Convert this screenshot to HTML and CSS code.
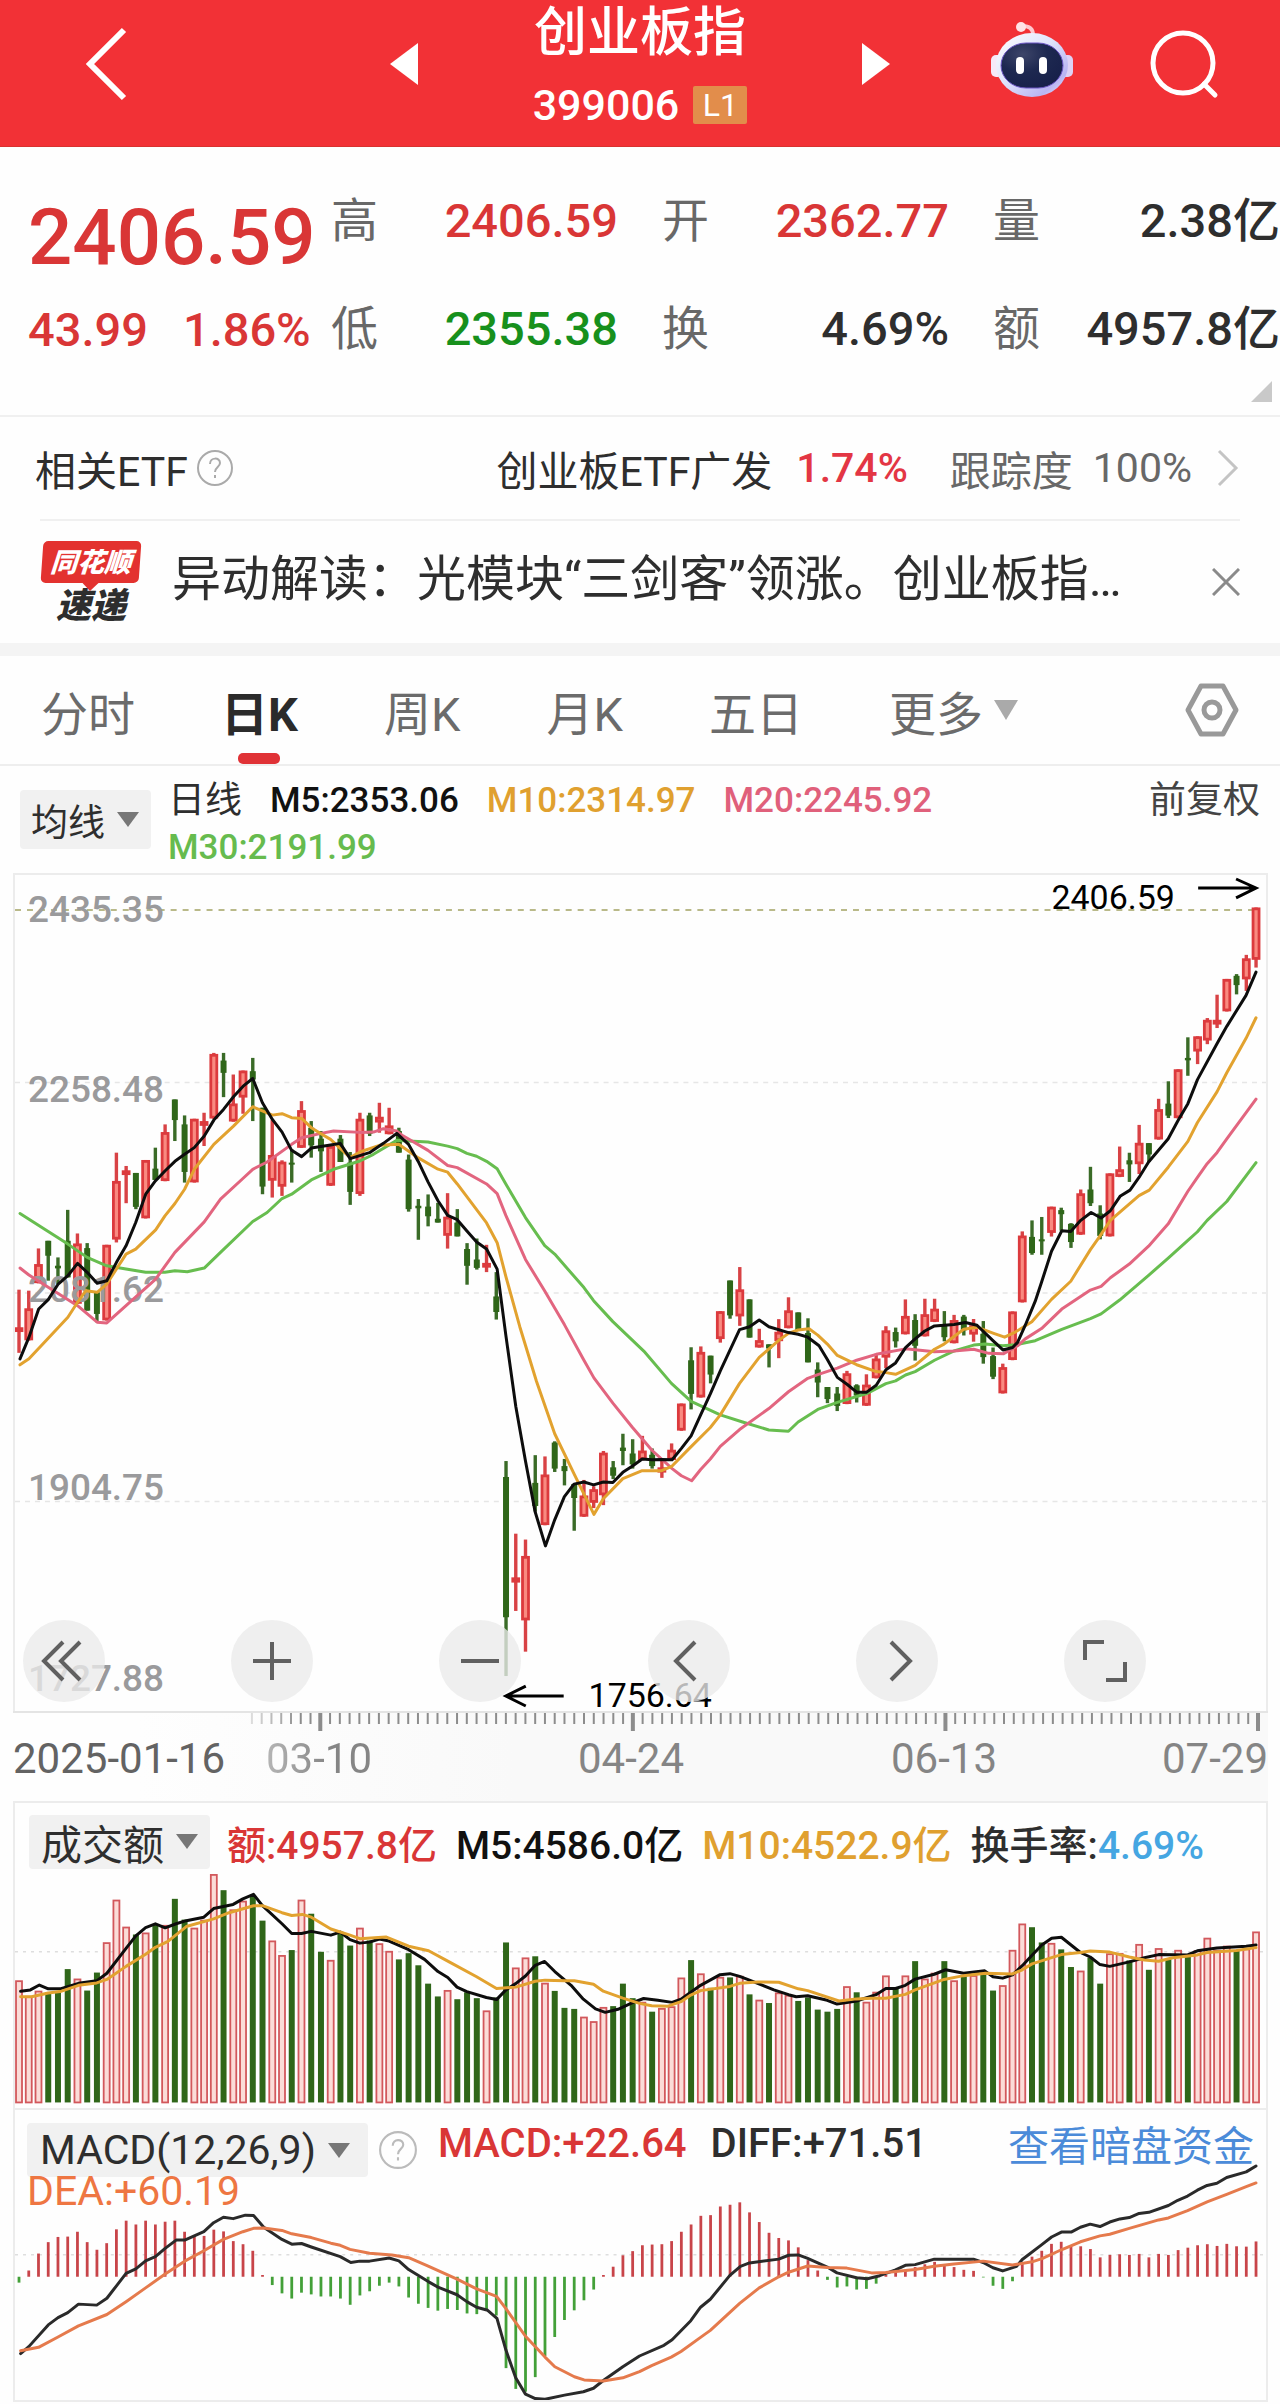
FILE: index.html
```html
<!DOCTYPE html>
<html lang="zh-CN">
<head>
<meta charset="utf-8">
<meta name="viewport" content="width=device-width, initial-scale=1">
<title>创业板指 399006</title>
<link rel="stylesheet" href="styles.css">
</head>
<body>
<header class="topbar">
  <div class="topbar-side">
    <button class="icon-btn back" aria-label="返回"><svg width="46" height="76" viewBox="0 0 46 76"><path d="M41 4 7 38l34 34" fill="none" stroke="#fff" stroke-width="6"/></svg></button>
    <button class="icon-btn" aria-label="上一只"><svg width="28" height="42" viewBox="0 0 28 42"><path d="M28 0v42L0 21z" fill="#fff"/></svg></button>
  </div>
  <div class="topbar-title">
    <h1>创业板指</h1>
    <p class="code">399006<span class="level">L1</span></p>
  </div>
  <div class="topbar-side">
    <button class="icon-btn" aria-label="下一只"><svg width="28" height="42" viewBox="0 0 28 42"><path d="M0 0v42l28-21z" fill="#fff"/></svg></button>
    <button class="icon-btn robot" aria-label="智能助手">
      <svg width="84" height="78" viewBox="0 0 84 78">
        <defs>
          <linearGradient id="shell" x1="0" y1="0" x2="1" y2="1"><stop offset="0" stop-color="#fff"/><stop offset=".45" stop-color="#dfe4fb"/><stop offset=".8" stop-color="#b9b4f2"/><stop offset="1" stop-color="#f3ecff"/></linearGradient>
          <radialGradient id="visor" cx=".35" cy=".25" r=".8"><stop offset="0" stop-color="#3d4569"/><stop offset=".5" stop-color="#1d2850"/><stop offset="1" stop-color="#17204a"/></radialGradient>
        </defs>
        <path d="M43 14c0-7-4-9-11-9" fill="none" stroke="#ffc9cf" stroke-width="4"/>
        <circle cx="31" cy="6" r="5" fill="#ffe3e6"/>
        <rect x="1" y="34" width="12" height="22" rx="5" fill="#f6e9f8"/>
        <rect x="70" y="34" width="13" height="22" rx="5" fill="#ddd2f5"/>
        <ellipse cx="42" cy="44" rx="36" ry="32" fill="url(#shell)"/>
        <rect x="11" y="22" width="62" height="45" rx="25" fill="url(#visor)" stroke="#6b55c4" stroke-width="1"/>
        <rect x="26" y="36" width="8" height="17" rx="4" fill="#fff"/>
        <rect x="49" y="36" width="8" height="17" rx="4" fill="#fff"/>
      </svg>
    </button>
    <button class="icon-btn" aria-label="搜索"><svg width="70" height="70" viewBox="0 0 70 70" fill="none" stroke="#fff" stroke-width="5" stroke-linecap="round"><circle cx="34" cy="34" r="30"/><path d="m55 55 11 11"/></svg></button>
  </div>
</header>

<main>
<section class="quote">
  <div class="quote-main">
    <p class="price up">2406.59</p>
    <p class="change up"><span>43.99</span><span>1.86%</span></p>
  </div>
  <dl class="stat">
    <div><dt>高</dt><dd class="up">2406.59</dd></div>
    <div><dt>低</dt><dd class="down">2355.38</dd></div>
  </dl>
  <dl class="stat">
    <div><dt>开</dt><dd class="up">2362.77</dd></div>
    <div><dt>换</dt><dd>4.69%</dd></div>
  </dl>
  <dl class="stat">
    <div><dt>量</dt><dd>2.38亿</dd></div>
    <div><dt>额</dt><dd>4957.8亿</dd></div>
  </dl>
  <span class="expand-corner"></span>
</section>

<section class="etf">
  <span>相关ETF</span>
  <svg class="help" width="38" height="38" viewBox="0 0 38 38"><circle cx="19" cy="19" r="17" fill="none" stroke="#aaa" stroke-width="2"/><path d="M14 15c0-7 10-7 10-1 0 4-5 4-5 9m0 3v3" fill="none" stroke="#aaa" stroke-width="2"/></svg>
  <a class="etf-link" href="#etf"><span>创业板ETF广发</span><span class="pct">1.74%</span><span class="muted">跟踪度</span><span class="muted full">100%</span>
  <svg width="24" height="40" viewBox="0 0 24 40"><path d="m3 3 17 17L3 37" fill="none" stroke="#c4c4c4" stroke-width="3"/></svg></a>
</section>

<section class="news">
  <span class="news-logo"><b class="logo-top">同花顺</b><b class="logo-bottom">速递</b></span>
  <a class="news-text" href="#news">异动解读：光模块“三剑客”领涨。创业板指…</a>
  <button class="icon-btn" aria-label="关闭"><svg width="28" height="28" viewBox="0 0 28 28"><path d="m1 1 26 26M27 1 1 27" stroke="#8a8a8a" stroke-width="3"/></svg></button>
</section>

<nav class="tabs">
  <button>分时</button><button class="active">日K</button><button>周K</button><button>月K</button><button>五日</button><button class="more">更多<i class="tri"></i></button>
  <button class="settings" aria-label="设置"><svg width="54" height="54" viewBox="0 0 54 54" fill="none" stroke="#999" stroke-width="5" stroke-linejoin="round"><path d="M16 3h22l13 24-13 24H16L3 27z"/><circle cx="27" cy="27" r="8"/></svg></button>
</nav>

<section class="ma-bar">
  <button class="chip">均线<i class="tri dark"></i></button>
  <p class="ma-list"><span class="cjk">日线</span><span class="ma5">M5:2353.06</span><span class="ma10">M10:2314.97</span><span class="ma20">M20:2245.92</span><span class="ma30">M30:2191.99</span></p>
  <span class="adjust">前复权</span>
</section>

<section class="panel k-panel">
  <svg id="kline" viewBox="14 875 1254 838" aria-label="日K线图"></svg>
  <div class="tools">
    <button aria-label="最左"><svg viewBox="0 0 82 82"><path d="M40 22 21 41l19 19M57 22 38 41l19 19"/></svg></button>
    <button aria-label="放大"><svg viewBox="0 0 82 82"><path d="M22 41h38M41 22v38"/></svg></button>
    <button aria-label="缩小"><svg viewBox="0 0 82 82"><path d="M22 41h38"/></svg></button>
    <button aria-label="左移"><svg viewBox="0 0 82 82"><path d="M47 22 28 41l19 19"/></svg></button>
    <button aria-label="右移"><svg viewBox="0 0 82 82"><path d="m35 22 19 19-19 19"/></svg></button>
    <button aria-label="全屏"><svg viewBox="0 0 82 82"><path d="M21 40V22h19M61 42v18H42"/></svg></button>
  </div>
</section>

<section class="timeline">
  <svg id="ruler" viewBox="14 1713 1254 20" aria-hidden="true"></svg>
  <div class="dates"><b>2025-01-16</b><span class="faded">03-10</span><span>04-24</span><span>06-13</span><span>07-29</span></div>
</section>

<section class="panel vol-panel">
  <div class="legend">
    <button class="chip">成交额<i class="tri dark"></i></button>
    <span class="up">额:4957.8亿</span><span class="ma5">M5:4586.0亿</span><span class="ma10">M10:4522.9亿</span><span>换手率:<em>4.69%</em></span>
  </div>
  <svg id="volume" viewBox="14 1872 1254 238" aria-label="成交额"></svg>
</section>

<section class="panel macd-panel">
  <svg id="macd" viewBox="14 2112 1254 290" aria-label="MACD"></svg>
  <div class="macd-text">
    <div class="legend">
      <button class="chip">MACD(12,26,9)<i class="tri dark"></i></button>
      <svg class="help" width="40" height="40" viewBox="0 0 38 38"><circle cx="19" cy="19" r="17" fill="none" stroke="#bbb" stroke-width="2"/><path d="M14 15c0-7 10-7 10-1 0 4-5 4-5 9m0 3v3" fill="none" stroke="#bbb" stroke-width="2"/></svg>
      <span class="up">MACD:+22.64</span><span>DIFF:+71.51</span>
      <a href="#fund">查看暗盘资金</a>
    </div>
    <p class="dea">DEA:+60.19</p>
  </div>
</section>
</main>
<script src="chart.js"></script>
</body>
</html>
```
FILE: styles.css
```css
* { box-sizing: border-box; margin: 0; padding: 0; }
body {
  background: #fefefe;
  color: #2e2e2e;
  font-family: Roboto, "Noto Sans CJK SC", sans-serif;
  font-size: 41px;
}
button { border: 0; background: none; font: inherit; color: inherit; cursor: pointer; }
a { color: inherit; text-decoration: none; }
em, i { font-style: normal; }
svg { display: block; }
.up { color: #d93636; }
.down { color: #17901c; }
.icon-btn { display: flex; align-items: center; }

.topbar {
  display: flex;
  align-items: center;
  height: 147px;
  padding: 0 61px;
  background: #f23136;
  border-bottom: 1px solid #d8322f;
  color: #fff;
}
.topbar-side { flex: 1; display: flex; align-items: center; justify-content: space-between; margin-top: -18px; }
.back { padding-left: 22px; }
.robot { margin-left: 24px; margin-top: -8px; }
.topbar-title { width: 444px; text-align: center; }
.topbar-title h1 { font-size: 53px; line-height: 64px; font-weight: 500; }
.code { display: flex; justify-content: center; align-items: center; gap: 14px; height: 80px; font-size: 43px; font-weight: 500; }
.level { width: 54px; height: 38px; border-radius: 2px; background: #e28d4b; font-size: 32px; line-height: 38px; font-weight: 400; }

.quote {
  position: relative;
  display: grid;
  grid-template-columns: 303px 331px 331px 1fr;
  height: 270px;
  padding: 20px 0 0 28px;
  border-bottom: 2px solid #f0f0f0;
  font-size: 47px;
}
.quote-main { padding-top: 25px; white-space: nowrap; }
.price { font-size: 78px; line-height: 92px; font-weight: 500; }
.change { display: flex; gap: 35px; line-height: 92px; font-weight: 500; }
.stat { padding-right: 44px; }
.stat:nth-of-type(3) { padding-right: 0; }
.stat div { display: flex; justify-content: space-between; height: 108px; line-height: 108px; }
.stat dt { color: #686868; }
.stat dd { font-weight: 500; }
.expand-corner { position: absolute; right: 8px; bottom: 13px; border-left: 21px solid transparent; border-bottom: 21px solid #c9c9c9; }

.etf { display: flex; align-items: center; height: 102px; padding: 0 40px 0 35px; gap: 8px; }
.etf-link { display: flex; align-items: center; margin-left: auto; }
.pct { color: #e33644; margin: 0 42px 0 24px; font-weight: 500; }
.muted { color: #686868; }
.full { margin: 0 24px 0 20px; }

.news {
  display: flex;
  align-items: center;
  height: 124px;
  margin: 0 40px;
  border-top: 2px solid #f0f0f0;
  font-size: 49px;
}
.news-logo { width: 98px; margin: 0 32px 0 2px; font-family: "Noto Sans CJK SC", sans-serif; text-align: center; font-style: italic; font-weight: 900; }
.logo-top { display: block; position: relative; height: 42px; border-radius: 5px; background: #e3322f; color: #fff; font-size: 27px; line-height: 40px; transform: skewX(-4deg); }
.logo-top::after { content: ""; position: absolute; left: 42px; bottom: -8px; border: 8px solid transparent; border-bottom: 0; border-top-color: #e3322f; }
.logo-bottom { display: block; font-size: 35px; line-height: 40px; }
.news-text { flex: 1; white-space: nowrap; line-height: 70px; padding-bottom: 4px; }

.tabs {
  display: flex;
  align-items: center;
  height: 123px;
  padding: 0 41px;
  border-top: 13px solid #f4f4f4;
  border-bottom: 2px solid #eee;
  font-size: 47px;
  color: #6b6b6b;
}
.tabs button { display: flex; align-items: center; height: 108px; margin-right: 86px; }
.tabs .active { position: relative; color: #2b2b2b; font-weight: 700; }
.active::after { content: ""; position: absolute; left: 50%; bottom: 0; width: 42px; height: 11px; margin-left: -21px; border-radius: 5px; background: #e03236; }
.tri { display: inline-block; margin-left: 11px; border: 12px solid transparent; border-top: 20px solid #aaa; border-bottom: 0; }
.tri.dark { border-width: 15px 11px 0; border-top-color: #777; margin-left: 12px; }
.tabs .settings { margin: 0 0 0 auto; }

.ma-bar { display: flex; height: 107px; padding: 11px 20px 0; font-size: 37px; }
.chip { display: flex; align-items: center; background: #f1f1f1; border-radius: 4px; white-space: nowrap; }
.ma-bar .chip { width: 131px; height: 59px; margin-top: 13px; padding-left: 11px; }
.ma-list { flex: 1; display: flex; flex-wrap: wrap; align-content: flex-start; margin-left: 17px; column-gap: 28px; font-size: 35px; line-height: 47px; font-weight: 500; }
.cjk { font-size: 37px; font-weight: 400; }
.ma5 { color: #111; }
.ma10 { color: #e0a02f; }
.ma20 { color: #e0607b; }
.ma30 { color: #66bb4e; }
.adjust { line-height: 47px; color: #444; }

.panel { position: relative; margin: 0 12px 0 13px; border: 2px solid #ececec; border-bottom: 0; }
.panel > svg { width: 100%; height: auto; }
.tools { position: absolute; left: 8px; right: 120px; bottom: 9px; display: flex; justify-content: space-between; }
.tools button { width: 82px; height: 82px; border-radius: 50%; background: rgba(234, 234, 234, .78); }
.tools svg { fill: none; stroke: #606060; stroke-width: 4; }

.timeline { margin: 0 12px 0 13px; border-top: 2px solid #e4e4e4; background: linear-gradient(90deg, #fefefe 10%, #f9f9f9 40%); }
.timeline svg { width: 100%; }
.dates { display: grid; grid-template-columns: 253px 312px 313px 1fr auto; justify-items: start; height: 68px; line-height: 52px; font-size: 42px; color: #858585; white-space: nowrap; }
.dates b { color: #636363; font-weight: 400; }
.dates .faded { background: linear-gradient(90deg, #b5b5b5, #858585 60%); background-clip: text; color: transparent; }

.legend { display: flex; align-items: center; gap: 22px; font-size: 39px; white-space: nowrap; font-weight: 500; }
.legend .chip { font-weight: 400; }
.vol-panel .legend { height: 68px; padding: 11px 14px 2px; gap: 19px; }
.vol-panel .chip { width: 181px; height: 54px; padding-left: 12px; font-size: 41px; margin-right: -2px; }
.legend em { color: #45a6e2; }
.macd-panel { display: grid; border-bottom: 2px solid #ececec; }
.macd-panel > svg, .macd-text { grid-area: 1 / 1; }
.macd-text { padding: 0 12px; }
.macd-text .legend { height: 66px; font-size: 40px; gap: 24px; }
.macd-text .chip { width: 341px; height: 54px; padding-left: 13px; margin: 14px -14px 0 0; font-size: 41px; }
.macd-text .help { margin: 14px -4px 0 0; }
.macd-text a { margin-left: auto; color: #4b8bd9; font-size: 41px; font-weight: 400; }
.dea { font-size: 41px; line-height: 30px; color: #ee7642; }
```
FILE: chart.js
```js
const NS = 'http://www.w3.org/2000/svg';
const STEP = 9.764;
const X0 = 18;
const RED = '#dc3a3d';
const GREEN = '#2f6619';

function add(root, tag, attrs, text) {
  const el = document.createElementNS(NS, tag);
  for (const k in attrs) el.setAttribute(k, attrs[k]);
  if (text) el.textContent = text;
  root.appendChild(el);
  return el;
}
const xAt = i => X0 + i * STEP;

// Each frame converts stored units to drawing units: x = x0 + u / sx, y = y0 + v / sy.
const K = [
  { x0: 0, y0: 870, sx: 3, sy: 3 },
  { x0: 400, y0: 1050, sx: 3, sy: 2.376 },
  { x0: 820, y0: 870, sx: 3, sy: 2.904 }
];
const S = [
  { x0: 0, y0: 1860, sx: 2.45, sy: 2.882 },
  { x0: 640, y0: 1860, sx: 2.45, sy: 2.882 }
];

function line(root, frames, parts, color, width) {
  const pts = [];
  parts.forEach((p, n) => {
    const f = frames[n];
    p.split(' ').forEach(s => {
      const [u, v] = s.split(',').map(Number);
      pts.push((f.x0 + u / f.sx).toFixed(1) + ',' + (f.y0 + v / f.sy).toFixed(1));
    });
  });
  add(root, 'polyline', { points: pts.join(' '), fill: 'none', stroke: color, 'stroke-width': width, 'stroke-linejoin': 'round', 'stroke-linecap': 'round' });
}

// colour, high, body top, body bottom, low
const candles = [
`R,1262,1375,1382,1452 R,1265,1318,1415,1415 R,1138,1185,1243,1243 G,1115,1115,1160,1235 G,1165,1190,1198,1245 G,1022,1115,1225,1225 R,1093,1123,1305,1305 G,1122,1137,1325,1325 G,1270,1270,1335,1360 R,1127,1127,1355,1355 R,850,935,1112,1120 R,890,903,912,1002 G,911,911,1013,1020 R,872,872,1048,1048 G,835,898,932,932 R,765,788,936,936 G,690,690,752,815 G,738,765,908,940 R,748,748,940,940 R,730,755,770,830 R,550,553,748,748 G,550,573,610,683 R,615,702,757,757 R,603,603,685,733 G,565,605,630,755 G,715,715,952,975 R,752,857,935,985 R,873,877,953,980 G,840,880,886,940 R,695,722,836,836 G,755,775,828,865 G,785,808,846,908 R,830,830,950,950 G,797,808,878,878 G,848,880,968,1007 R,730,748,975,980 G,730,738,793,800 R,700,742,760,790 R,715,768,795,795 G,775,785,850,850`,
`G,250,262,380,386 G,356,372,378,453 G,345,374,397,421 G,365,403,412,412 R,342,398,444,474 G,380,412,445,445 G,461,475,515,560 G,450,500,520,524 R,465,508,518,530 G,530,588,625,643 G,980,1018,1352,1492 R,1153,1257,1270,1337 R,1167,1206,1360,1434 G,966,1032,1087,1100 R,969,1012,1133,1133 G,933,936,998,1006 G,975,992,1004,1038 G,1035,1035,1068,1146 R,1025,1062,1113,1113 R,1040,1047,1080,1092 R,956,960,1062,1085 G,980,995,1015,1023 G,915,948,956,990 G,928,962,988,998 R,920,955,978,978 G,950,965,992,998 R,975,995,1008,1020 R,938,953,978,978 R,843,843,908,908 G,709,740,820,857 R,707,720,829,829 G,729,729,774,795 R,623,623,690,698 G,550,550,633,641 R,518,571,636,658 G,595,595,686,686 R,665,692,710,710 G,702,702,712,757 R,642,672,695,735 R,590,621,664,664 G,626,626,670,670 G,640,675,745,745 G,745,762,793,828`,
`G,1505,1505,1540,1552 G,1505,1524,1560,1575 R,1458,1465,1555,1555 G,1497,1500,1530,1550 R,1468,1498,1560,1560 R,1408,1422,1480,1480 R,1328,1340,1420,1450 G,1332,1345,1372,1390 R,1250,1298,1352,1352 G,1293,1310,1385,1428 R,1248,1293,1358,1358 R,1248,1277,1316,1316 G,1284,1325,1360,1372 R,1295,1310,1378,1378 G,1295,1300,1340,1355 R,1307,1325,1353,1373 G,1313,1350,1418,1437 G,1390,1415,1475,1482 R,1437,1447,1524,1524 R,1285,1285,1427,1427 R,1052,1064,1259,1259 G,1020,1068,1115,1120 G,1010,1075,1081,1120 R,980,980,1057,1067 G,983,990,1002,1050 G,1028,1030,1083,1100 R,930,941,1062,1062 G,864,930,970,978 G,976,1000,1065,1075 R,883,883,1067,1067 R,805,871,894,894 G,823,845,857,908 R,742,794,857,885 G,795,795,828,850 R,666,696,785,785 G,615,680,715,722 R,580,580,723,723 G,487,547,554,599 R,484,484,529,565 R,431,436,497,507 R,363,436,450,460 R,317,317,412,412 G,303,308,335,362 R,247,257,319,352 R,109,109,262,284`
];

const k = document.getElementById('kline');
[1083, 1294, 1503].forEach(y => add(k, 'line', { x1: 14, x2: 1268, y1: y, y2: y, stroke: '#e6e6e6', 'stroke-width': 1.5, 'stroke-dasharray': '5 5' }));
add(k, 'line', { x1: 14, x2: 1258, y1: 910, y2: 910, stroke: '#a3a363', 'stroke-width': 1.5, 'stroke-dasharray': '6 6' });

let n = 0;
candles.forEach((part, p) => part.split(' ').forEach(row => {
  const c = row.split(',');
  const [hi, top, bot, lo] = c.slice(1).map(v => K[p].y0 + v / K[p].sy);
  const x = xAt(n++);
  const red = c[0] === 'R';
  add(k, 'rect', { x: x - 1.7, y: hi, width: 3.4, height: lo - hi, fill: red ? '#d84245' : '#3a6b27' });
  if (red) add(k, 'rect', { x: x - 3, y: top + 1.4, width: 6, height: Math.max(bot - top - 3, 2), fill: '#f98a80', stroke: RED, 'stroke-width': 2.8 });
  else add(k, 'rect', { x: x - 3, y: top, width: 6, height: Math.max(bot - top, 2), fill: GREEN });
}));

[['2435.35', 922], ['2258.48', 1103], ['2081.62', 1303], ['1904.75', 1502], ['1727.88', 1693]].forEach(([t, y]) =>
  add(k, 'text', { x: 27, y, 'font-size': 37, 'font-weight': 500, fill: '#9a9a9c' }, t));

line(k, K, [
 '57,1033 142,1087 201,1125 259,1165 318,1190 376,1200 435,1210 493,1210 523,1205 560,1208 611,1197 660,1150 757,1057 800,1030 845,988 874,975 933,932 1000,900 1079,875 1120,855 1190,813',
 '10,217 84,220 143,230 172,236 201,247 230,254 260,266 292,284 318,320 377,400 435,467 465,487 553,567 582,598 640,648 733,718 816,795 875,838 963,870 1030,887 1109,906 1168,909 1197,887 1256,857',
 '55,1550 143,1524 201,1495 230,1487 260,1470 289,1460 347,1427 406,1400 465,1383 500,1380 553,1385 590,1382 650,1370 730,1337 816,1306 848,1292 904,1252 991,1180 1050,1130 1109,1078 1138,1053 1167,1020 1226,965 1314,852'
], '#67bd4f', 3);
line(k, K, [
 '57,1197 84,1218 142,1255 230,1310 289,1360 318,1362 376,1310 465,1230 523,1150 611,1058 660,990 728,927 757,900 800,878 874,825 904,805 962,792 1000,785 1080,789 1120,788 1150,778 1190,785',
 '10,206 84,240 143,276 172,281 260,320 292,343 318,395 377,500 435,575 494,655 553,740 583,782 640,842 699,900 758,955 818,998 846,1015 877,1027 904,1000 933,975 963,945 1021,905 1109,855 1168,815 1226,783 1256,774',
 '55,1450 113,1427 172,1410 260,1394 347,1402 406,1400 465,1395 510,1407 555,1408 597,1385 620,1365 669,1335 730,1278 816,1223 848,1212 876,1187 933,1147 991,1095 1050,1030 1109,935 1138,895 1167,855 1197,822 1226,783 1314,667'
], '#e2657f', 3);
line(k, K, [
 '57,1488 84,1470 142,1408 201,1345 230,1300 255,1265 289,1270 318,1245 376,1155 405,1140 465,1082 493,1040 523,1003 552,960 581,900 640,825 699,770 757,712 816,737 845,733 874,745 904,747 933,775 962,793 991,810 1050,865 1079,848 1138,828 1196,825',
 '55,258 114,285 143,292 172,320 260,413 292,460 318,540 360,660 410,790 465,915 523,1010 583,1107 611,1070 670,1022 728,1003 787,1003 818,992 870,950 933,900 963,870 1021,795 1080,733 1138,693 1168,676 1197,668 1230,665 1256,680',
 '25,1380 55,1413 113,1440 172,1460 201,1463 230,1468 289,1442 347,1395 376,1380 435,1337 475,1331 523,1348 558,1360 590,1345 640,1315 699,1250 757,1197 816,1105 845,1065 876,1020 962,948 993,932 1050,865 1109,790 1138,735 1197,645 1226,590 1284,490 1314,430'
], '#e2a22f', 3);
line(k, K, [
 '57,1470 84,1405 113,1320 142,1292 172,1245 201,1220 230,1183 259,1210 289,1243 318,1235 347,1180 376,1130 405,1060 435,975 464,935 493,905 523,876 552,855 581,835 611,800 640,752 669,720 699,682 728,650 757,627 786,700 816,750 845,788 874,843 904,862 933,836 991,827 1020,822 1050,868 1108,850 1150,822 1190,792',
 '25,225 55,267 84,315 114,360 143,395 172,405 201,432 230,458 260,475 292,523 318,680 348,850 377,980 406,1100 437,1182 465,1120 494,1065 523,1035 553,1030 582,1037 611,1030 640,1031 670,1007 699,992 728,975 758,977 787,976 818,977 846,950 875,920 904,870 933,820 963,765 1021,667 1051,660 1080,644 1109,660 1168,674 1197,678 1226,685 1256,703',
 '0,1385 25,1425 55,1477 84,1497 113,1520 143,1520 172,1500 201,1455 230,1435 260,1390 289,1365 318,1342 347,1327 406,1323 440,1317 475,1325 523,1370 553,1397 582,1390 597,1375 620,1325 650,1255 669,1200 699,1110 730,1050 757,1052 787,1020 818,997 848,1013 876,992 905,950 935,932 962,895 991,850 1050,782 1079,730 1109,680 1138,610 1197,505 1226,455 1284,365 1314,297'
], '#0d0d0d', 3);

add(k, 'text', { x: 1053, y: 909, 'font-size': 34, fill: '#000' }, '2406.59');
add(k, 'text', { x: 589, y: 1709, 'font-size': 34, fill: '#000' }, '1756.64');
add(k, 'path', { d: 'M1200 888h57M1238 879l20 9-20 10M564 1698h-57M526 1688l-20 10 20 10', fill: 'none', stroke: '#000', 'stroke-width': 3 });

const r = document.getElementById('ruler');
for (let i = 24; i < 128; i++) {
  const x = 1258 - (127 - i) * 9.76;
  const major = [31, 63, 95, 127].includes(i);
  add(r, 'line', { x1: x, x2: x, y1: 1713, y2: major ? 1731 : 1724, stroke: '#8c8c8c', 'stroke-width': major ? 4 : 2, opacity: Math.min(1, (i - 22) / 7) });
}

const volumes = (
 'R350 R395 R380 G385 G385 G318 R345 G380 G328 R240 R117 R195 G218 R212 G188 R190 G115 G175 R198 R175 R43 G90 R145 R120 G107 G178 R235 R277 G263 R117 G158 G268 R291 G210 G250 R198 G235 R243 R265 G290 G272 G307 G360 G397 R378 G405 G385 G402 R437 G400 G241 R313 R284 G281 R357 G381 G430 G433 R455 R468 R427 G425 G360 G402 ' +
 'R412 G441 R430 R425 R342 G292 R330 G372 R340 G342 R337 G391 R406 G416 R385 R392 G410 G400 G435 G441 G433 R367 G385 R412 R383 R336 G375 R336 G295 R345 R328 G295 R350 G335 R335 G323 G380 R364 R262 R186 G197 G241 R242 G261 G312 R322 G285 G360 R272 R271 G293 R245 G320 R257 G290 R262 G283 R263 R227 R262 R250 G265 R258 R209').split(' ');
const vol = document.getElementById('volume');
add(vol, 'line', { x1: 14, x2: 1268, y1: 1953, y2: 1953, stroke: '#dedede', 'stroke-width': 1.5, 'stroke-dasharray': '3 5' });
volumes.forEach((s, i) => {
  const y = 1860 + s.slice(1) / 2.882;
  const red = s[0] === 'R';
  add(vol, 'rect', red
    ? { x: xAt(i) - 3, y: y + 1, width: 6, height: 2103 - y, fill: '#fbdcd8', stroke: '#d2585c', 'stroke-width': 1.8 }
    : { x: xAt(i) - 3, y, width: 6, height: 2104 - y, fill: GREEN });
});
line(vol, S, [
 '48,382 72,378 94,364 116,375 145,375 190,359 235,352 260,330 307,258 331,222 355,198 379,187 403,199 430,187 455,178 498,168 522,143 570,131 594,115 620,102 642,135 690,187 714,215 738,215 762,209 810,220 833,211 857,233 881,243 905,240 929,231 953,237 1001,262 1040,290 1073,325 1097,342 1120,370 1144,383 1192,400 1217,406 1240,378 1264,360 1288,338 1312,307 1335,296 1360,325 1400,365 1430,405 1460,433 1484,443 1515,434 1551,415',
 '10,403 45,408 80,414 102,405 150,365 198,334 222,331 246,339 270,350 330,378 366,392 385,398 413,395 461,408 485,419 533,410 581,392 605,374 629,374 653,365 677,347 724,333 752,320 796,330 848,323 868,340 892,344 916,335 940,308 964,278 988,248 1012,229 1036,226 1083,270 1107,283 1131,305 1155,310 1203,297 1240,285 1275,276 1346,277 1370,265 1418,257 1490,252 1514,248'
], '#0d0d0d', 3);
line(vol, S, [
 '48,398 75,398 116,387 145,383 190,365 235,358 260,348 307,310 355,275 379,255 410,238 455,195 522,173 560,155 620,135 642,135 690,155 714,163 740,160 762,168 810,202 857,220 881,230 945,225 1001,252 1050,265 1097,295 1168,340 1217,374 1264,370 1312,353 1336,350 1384,352 1408,352 1455,362 1479,382 1527,402',
 '0,417 30,424 70,425 102,412 126,393 150,380 222,368 246,359 290,355 342,356 390,375 413,380 490,410 533,404 570,402 605,402 653,391 677,378 748,348 796,337 850,330 916,332 940,320 964,303 1012,285 1036,276 1083,270 1107,266 1155,269 1203,283 1240,292 1275,295 1310,285 1370,277 1394,270 1466,264 1514,256'
], '#e2a22f', 3);

const bars = (
 '1225 1190 1141 1108 1093 1092 1078 1108 1130 1111 1071 1046 1057 1046 1057 1049 1046 1078 1088 1090 1072 1077 1105 1114 1133 1203 1232 1256 1271 1254 1259 1265 1265 1271 1289 1262 1250 1234 1225 1236 1268 1286 1298 1306 1301 1304 1314 1316 1305 1320 1472 1532 1540 1498 1437 1382 1333 1305 1276 1245 1203 1179 1146 1134 ' +
 '1117 1115 1114 1105 1078 1057 1032 1030 1005 1000 993 1022 1050 1081 1096 1103 1123 1160 1190 1217 1239 1236 1245 1243 1228 1203 1195 1190 1180 1172 1165 1175 1180 1188 1191 1210 1234 1243 1221 1170 1150 1133 1113 1107 1120 1120 1128 1152 1145 1143 1145 1142 1152 1142 1145 1131 1124 1117 1114 1119 1113 1120 1121 1106').split(' ');
const macd = document.getElementById('macd');
const zero = 1860 + 1208 / 2.882;
add(macd, 'line', { x1: 14, x2: 1268, y1: 2257, y2: 2257, stroke: '#dedede', 'stroke-width': 1.5, 'stroke-dasharray': '3 5' });
bars.forEach((v, i) => add(macd, 'line', { x1: xAt(i), x2: xAt(i), y1: zero, y2: 1860 + v / 2.882, stroke: v > 1208 ? '#43a038' : '#c84449', 'stroke-width': 2.8 }));
line(macd, S, [
 '48,1430 68,1410 116,1347 140,1326 164,1312 190,1287 235,1290 260,1270 283,1235 307,1198 331,1185 355,1162 379,1150 403,1126 430,1102 451,1102 498,1078 522,1052 546,1036 570,1040 600,1030 620,1031 645,1065 690,1100 714,1114 738,1112 762,1122 833,1150 859,1167 881,1163 905,1163 953,1154 977,1162 1001,1187 1049,1222 1073,1238 1120,1260 1144,1280 1168,1296 1195,1305 1218,1328 1240,1420 1264,1500 1288,1547 1312,1560 1336,1562 1384,1550 1430,1540 1455,1530 1479,1508 1527,1468',
 '0,1437 60,1406 80,1390 126,1335 150,1296 174,1273 222,1204 248,1178 270,1168 342,1157 366,1146 390,1145 413,1155 461,1180 485,1197 533,1211 560,1214 590,1205 629,1188 653,1175 677,1173 724,1157 820,1157 844,1167 868,1182 892,1191 926,1178 940,1158 988,1115 1012,1093 1036,1079 1060,1079 1083,1065 1107,1056 1131,1063 1155,1050 1180,1041 1203,1037 1227,1025 1251,1022 1299,1002 1322,987 1346,975 1370,958 1394,944 1418,938 1442,921 1490,905 1514,888'
], '#2a2a2a', 3);
line(macd, S, [
 '48,1422 92,1412 140,1382 190,1350 260,1317 307,1280 355,1240 403,1200 451,1163 498,1133 546,1100 594,1078 620,1068 645,1067 690,1074 714,1084 762,1095 810,1111 833,1117 857,1129 905,1140 960,1145 1001,1153 1049,1177 1120,1215 1168,1243 1217,1265 1240,1300 1288,1380 1336,1440 1360,1468 1408,1497 1432,1506 1479,1509 1527,1500',
 '0,1482 30,1465 78,1440 102,1424 150,1383 174,1363 246,1285 294,1240 342,1208 366,1195 413,1177 461,1181 509,1183 570,1197 605,1196 653,1190 677,1187 724,1178 772,1171 844,1163 916,1174 964,1165 990,1155 1036,1130 1083,1107 1131,1090 1155,1085 1203,1068 1275,1044 1299,1038 1346,1017 1394,992 1442,970 1490,948 1514,937'
], '#e57a4c', 3);
```
